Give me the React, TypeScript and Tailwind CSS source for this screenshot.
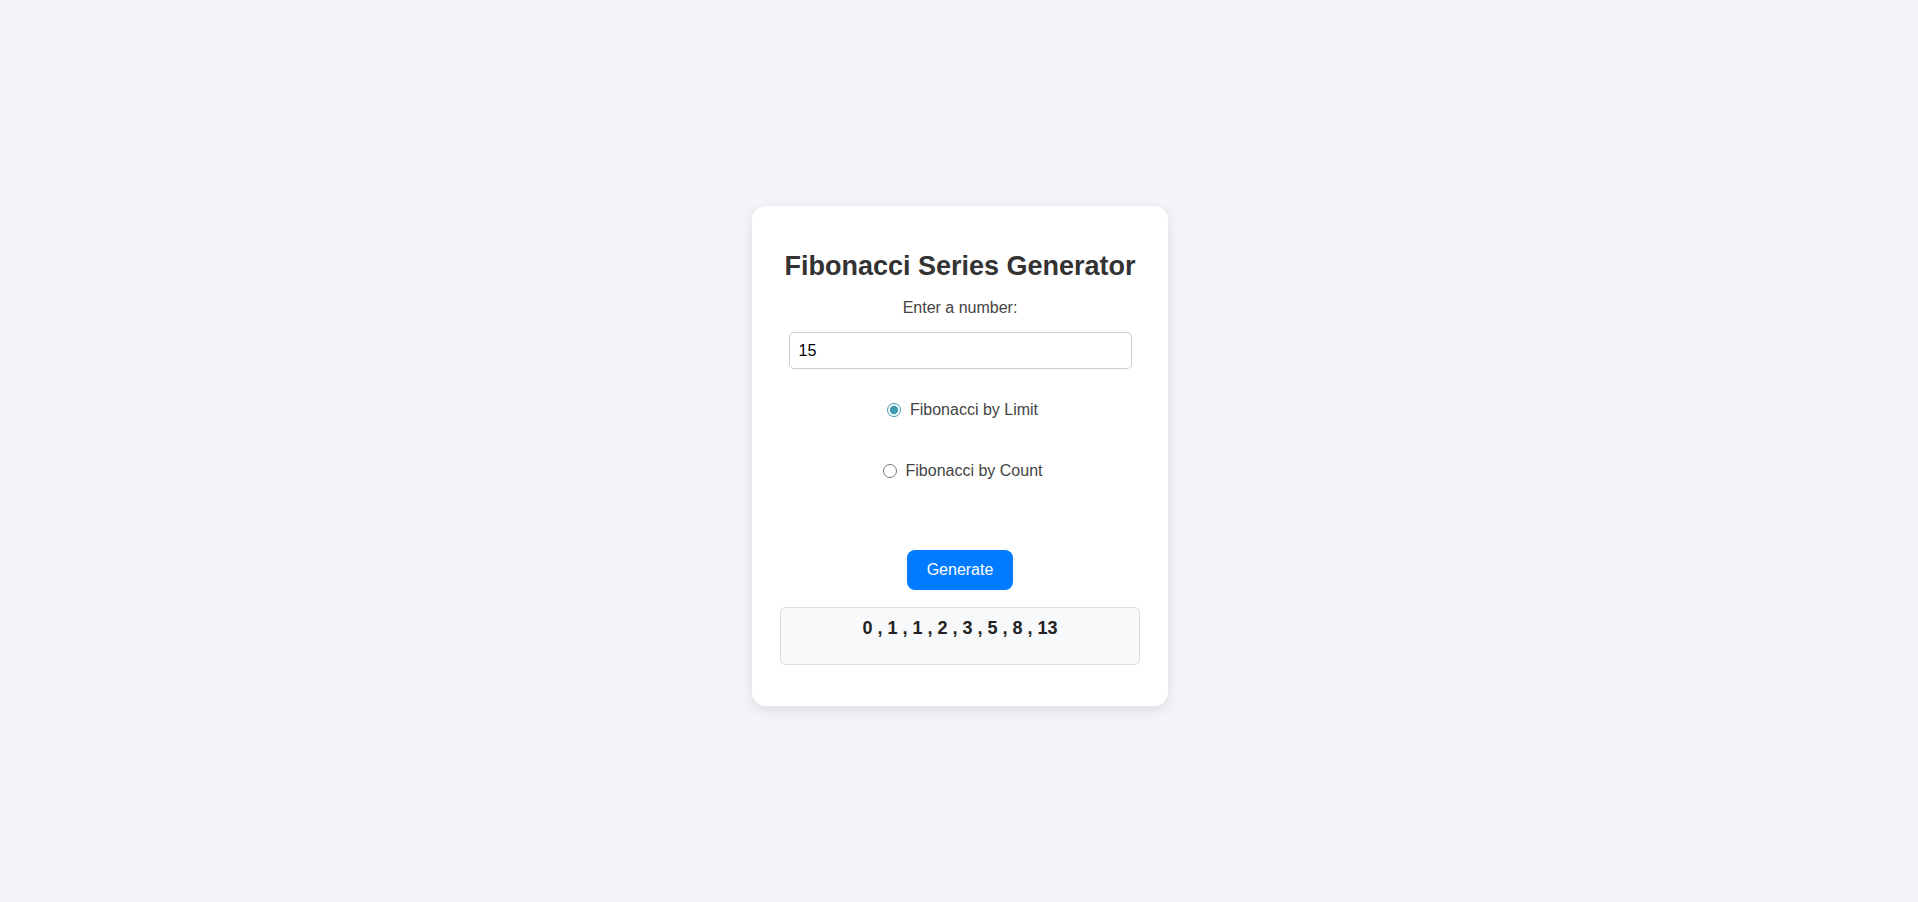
import { useState } from "react"

function fib(n: number, mode: "limit" | "count") {
  const out: number[] = []
  let a = 0
  let b = 1
  if (mode === "limit") {
    while (a < n) {
      out.push(a)
      ;[a, b] = [b, a + b]
    }
  } else {
    for (let i = 0; i < n; i++) {
      out.push(a)
      ;[a, b] = [b, a + b]
    }
  }
  return out
}

export default function App() {
  const [value, setValue] = useState("15")
  const [mode, setMode] = useState<"limit" | "count">("limit")
  const [result, setResult] = useState(fib(15, "limit"))

  return (
    <div className="min-h-screen bg-[#f4f5f9] flex items-center justify-center pt-[10px] pl-[2px] font-['Liberation_Sans',Arial,sans-serif] text-[#333]">
      <div className="w-[416px] h-[500px] bg-white rounded-[14px] shadow-[0_4px_14px_rgba(0,0,0,0.1)] flex flex-col items-center pt-[44px]">
        {/* Title */}
        <h2 className="text-[27px] leading-[32px] font-bold text-[#333]">Fibonacci Series Generator</h2>

        <label className="mt-[17px] text-base leading-[18px] text-[#444]">Enter a number:</label>

        <input
          type="text"
          value={value}
          onChange={(e) => setValue(e.target.value)}
          className="mt-[15px] w-[343px] h-[37px] border border-[#ccc] rounded-[5px] px-[9px] text-base text-black outline-none"
        />

        {/* Mode radios */}
        <label className="mt-[31px] h-[20px] flex items-center text-base text-[#444] cursor-pointer">
          <input
            type="radio"
            name="mode"
            checked={mode === "limit"}
            onChange={() => setMode("limit")}
            className="m-0 ml-[5px] mr-[9px] w-[14px] h-[14px] accent-[#3f9bb0]"
          />
          Fibonacci by Limit
        </label>

        <label className="mt-[41px] h-[20px] flex items-center text-base text-[#444] cursor-pointer">
          <input
            type="radio"
            name="mode"
            checked={mode === "count"}
            onChange={() => setMode("count")}
            className="m-0 ml-[5px] mr-[9px] w-[14px] h-[14px] accent-[#3f9bb0]"
          />
          Fibonacci by Count
        </label>

        <button
          onClick={() => setResult(fib(parseInt(value) || 0, mode))}
          className="mt-[69px] h-[40px] px-5 rounded-[8px] bg-[#007bff] text-white text-base"
        >
          Generate
        </button>

        {/* Output */}
        <div className="mt-[17px] w-[360px] h-[58px] bg-[#f8f9fa] border border-[#ddd] rounded-[5px] pt-[10px] text-center text-[18px] leading-[21px] font-bold text-[#222]">
          {result.join(" , ")}
        </div>
      </div>
    </div>
  )
}
